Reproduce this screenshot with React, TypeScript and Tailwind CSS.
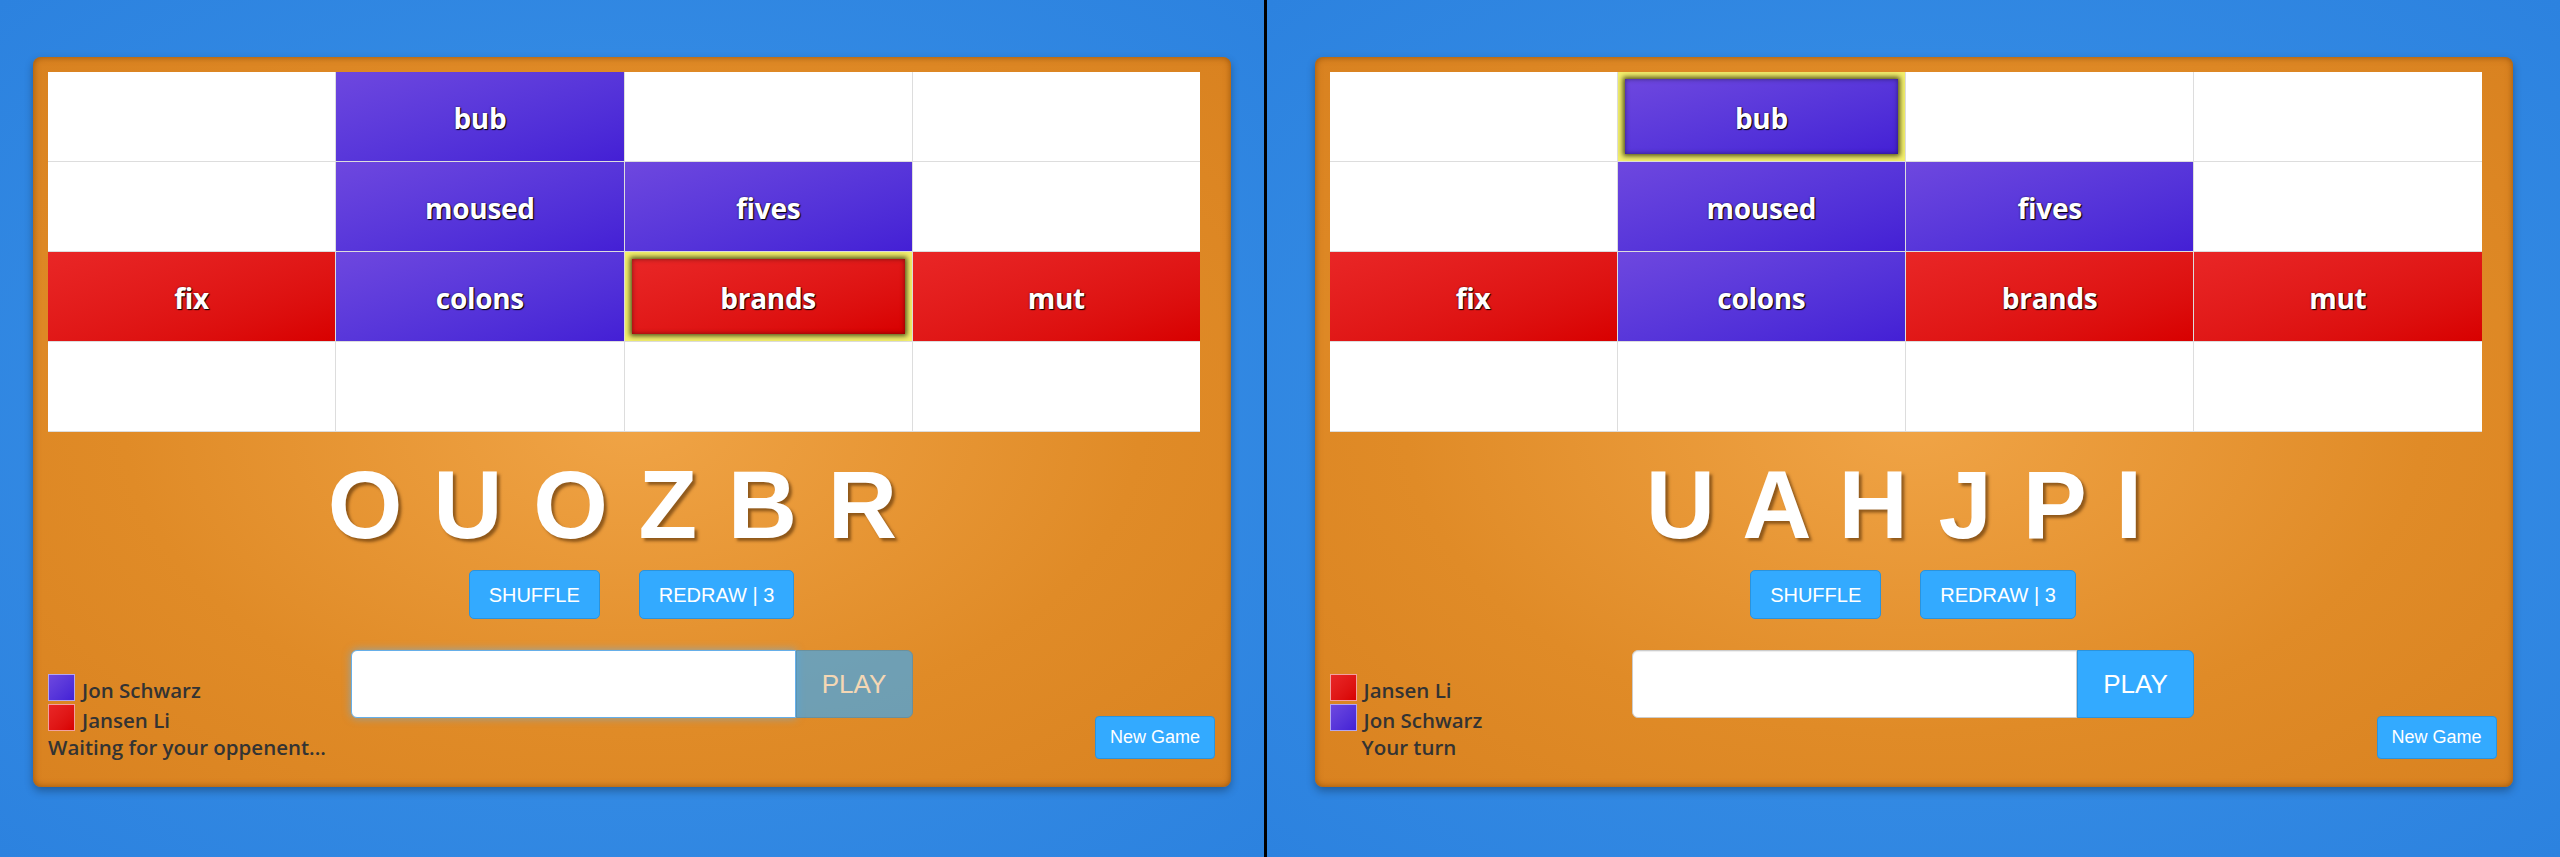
import React from "react";

type Tile = { w: string; c: "p" | "r" } | null;

const board: Tile[][] = [
  [null, { w: "bub", c: "p" }, null, null],
  [null, { w: "moused", c: "p" }, { w: "fives", c: "p" }, null],
  [
    { w: "fix", c: "r" },
    { w: "colons", c: "p" },
    { w: "brands", c: "r" },
    { w: "mut", c: "r" },
  ],
  [null, null, null, null],
];

const PURPLE = "bg-linear-to-br from-[#6e47df] to-[#441fd5]";
const RED = "bg-linear-to-br from-[#e92626] to-[#d80000]";

function Cell({ tile, selected }: { tile: Tile; selected: boolean }) {
  if (!tile) return <div className="bg-white" />;
  const grad = tile.c === "p" ? PURPLE : RED;
  const text = (
    <span className="pt-[2px] text-white font-bold text-[28px] leading-none tracking-[-0.3px] font-['Open_Sans',sans-serif] [text-shadow:1px_1px_1px_#000,0_0_2px_rgba(0,0,0,0.6)]">
      {tile.w}
    </span>
  );
  if (selected) {
    return (
      <div className="bg-[#f3ef6c] p-[7px] flex">
        <div
          className={`${grad} flex-1 flex items-center justify-center shadow-[0_0_5px_2px_rgba(30,30,0,0.75),inset_0_0_5px_rgba(0,0,0,0.45)]`}
        >
          {text}
        </div>
      </div>
    );
  }
  return <div className={`${grad} flex items-center justify-center`}>{text}</div>;
}

type Player = { name: string; c: "p" | "r" };

function Half({
  letters,
  players,
  status,
  statusIndent,
  selected,
  focused,
  playDisabled,
  widthClass,
}: {
  letters: string;
  players: Player[];
  status: string;
  statusIndent: boolean;
  selected: [number, number];
  focused: boolean;
  playDisabled: boolean;
  widthClass: string;
}) {
  return (
    <div
      className={`${widthClass} h-full flex justify-center pt-[57px] bg-[radial-gradient(ellipse_at_center,#3c94e9_0%,#2c82df_100%)]`}
    >
      <div className="w-[1198px] h-[730px] rounded-[8px] flex flex-col pl-[15px] pr-[16px] pt-[15px] pb-[25px] bg-[radial-gradient(ellipse_at_center,#f0a446_0%,#e08b27_60%,#d98220_100%)] shadow-[inset_0_0_7px_rgba(130,65,0,0.75),0_4px_8px_rgba(0,0,0,0.3)]">
        <div className="grid grid-cols-4 grid-rows-[repeat(4,89px)] gap-px bg-[#dddddd] pb-px w-[1152px]">
          {board.map((row, r) =>
            row.map((t, c) => (
              <Cell
                key={`${r}-${c}`}
                tile={t}
                selected={selected[0] === r && selected[1] === c}
              />
            ))
          )}
        </div>

        <div className="mt-[25px] pr-[36px] text-center text-white font-bold text-[96px] leading-[96px] tracking-[2px] whitespace-pre font-['Liberation_Sans',Arial,sans-serif] [text-shadow:3px_3px_3px_rgba(70,35,0,0.55)]">
          {letters}
        </div>

        <div className="mt-[17px] flex justify-center gap-[39px] font-['Liberation_Sans',Arial,sans-serif]">
          <div className="h-[49px] px-[19px] flex items-center rounded-[5px] border border-[#2b93dc] bg-[#33aaff] text-white text-[20px]">
            SHUFFLE
          </div>
          <div className="h-[49px] px-[19px] flex items-center rounded-[5px] border border-[#2b93dc] bg-[#33aaff] text-white text-[20px]">
            REDRAW | 3
          </div>
        </div>

        <div className="mt-[31px] flex-1 grid grid-cols-[1fr_auto_1fr]">
          <div className="self-end flex flex-col text-[20.5px] font-semibold text-[#333333] font-['Open_Sans',sans-serif]">
            {players.map((p) => (
              <div key={p.name} className="h-[30px] flex items-center gap-[7px]">
                <div
                  className={`w-[27px] h-[27px] border ${
                    p.c === "p"
                      ? "bg-linear-to-br from-[#6e47df] to-[#441fd5] border-[#b3a6f0]"
                      : "bg-linear-to-br from-[#e92626] to-[#d80000] border-[#f2a0a0]"
                  }`}
                />
                <span className="pt-[5px] leading-[30px]">{p.name}</span>
              </div>
            ))}
            <div className={`h-[30px] leading-[30px] whitespace-nowrap ${statusIndent ? "pl-[32px]" : ""}`}>
              {status}
            </div>
          </div>

          <div className="self-start flex h-[68px] font-['Liberation_Sans',Arial,sans-serif]">
            <div
              className={`w-[445px] h-full bg-white rounded-l-[6px] border ${
                focused
                  ? "border-[#66afe9] shadow-[0_0_8px_rgba(102,175,233,0.7)]"
                  : "border-[#cccccc] shadow-[inset_0_1px_1px_rgba(0,0,0,0.075)]"
              }`}
            />
            <div
              className={`w-[117px] h-full flex items-center justify-center rounded-r-[6px] border border-[#2b93dc] bg-[#33aaff] text-white text-[26px] ${
                playDisabled ? "opacity-65" : ""
              }`}
            >
              PLAY
            </div>
          </div>

          <div className="self-end justify-self-end mb-[3px] h-[43px] w-[120px] flex items-center justify-center rounded-[4px] border border-[#2b93dc] bg-[#33aaff] text-white text-[18px] font-['Liberation_Sans',Arial,sans-serif]">
            New Game
          </div>
        </div>
      </div>
    </div>
  );
}

export default function App() {
  return (
    <div className="flex w-[2560px] h-[857px] overflow-hidden">
      <Half
        widthClass="w-[1264px] shrink-0"
        letters="O U O Z B R"
        players={[
          { name: "Jon Schwarz", c: "p" },
          { name: "Jansen Li", c: "r" },
        ]}
        status="Waiting for your oppenent..."
        statusIndent={false}
        selected={[2, 2]}
        focused={true}
        playDisabled={true}
      />
      <div className="w-[3px] h-full bg-black shrink-0" />
      <Half
        widthClass="flex-1"
        letters="U A H J P I"
        players={[
          { name: "Jansen Li", c: "r" },
          { name: "Jon Schwarz", c: "p" },
        ]}
        status="Your turn"
        statusIndent={true}
        selected={[0, 1]}
        focused={false}
        playDisabled={false}
      />
    </div>
  );
}
